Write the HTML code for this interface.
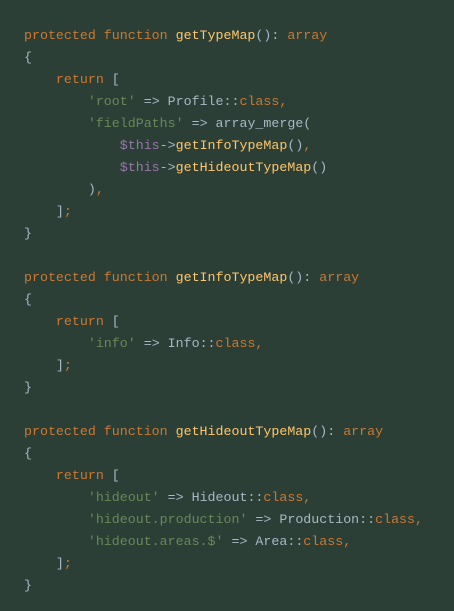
<!DOCTYPE html><html><head><style>
html,body{margin:0;padding:0;background:#2b3f36;width:454px;height:611px;overflow:hidden}
pre{margin:0;position:absolute;left:24px;top:25px;font-family:"Liberation Mono",monospace;font-size:13.3px;line-height:22px;color:#a9b7c6}
.k{color:#cc7832}.f{color:#ffc66d}.s{color:#6a8759}.v{color:#9876aa}
</style></head><body><pre><span class="k">protected function </span><span class="f">getTypeMap</span>(): <span class="k">array</span>
{
    <span class="k">return</span> [
        <span class="s">'root'</span> => Profile::<span class="k">class,</span>
        <span class="s">'fieldPaths'</span> => array_merge(
            <span class="v">$this</span>-><span class="f">getInfoTypeMap</span>()<span class="k">,</span>
            <span class="v">$this</span>-><span class="f">getHideoutTypeMap</span>()
        )<span class="k">,</span>
    ]<span class="k">;</span>
}

<span class="k">protected function </span><span class="f">getInfoTypeMap</span>(): <span class="k">array</span>
{
    <span class="k">return</span> [
        <span class="s">'info'</span> => Info::<span class="k">class,</span>
    ]<span class="k">;</span>
}

<span class="k">protected function </span><span class="f">getHideoutTypeMap</span>(): <span class="k">array</span>
{
    <span class="k">return</span> [
        <span class="s">'hideout'</span> => Hideout::<span class="k">class,</span>
        <span class="s">'hideout.production'</span> => Production::<span class="k">class,</span>
        <span class="s">'hideout.areas.$'</span> => Area::<span class="k">class,</span>
    ]<span class="k">;</span>
}</pre></body></html>
